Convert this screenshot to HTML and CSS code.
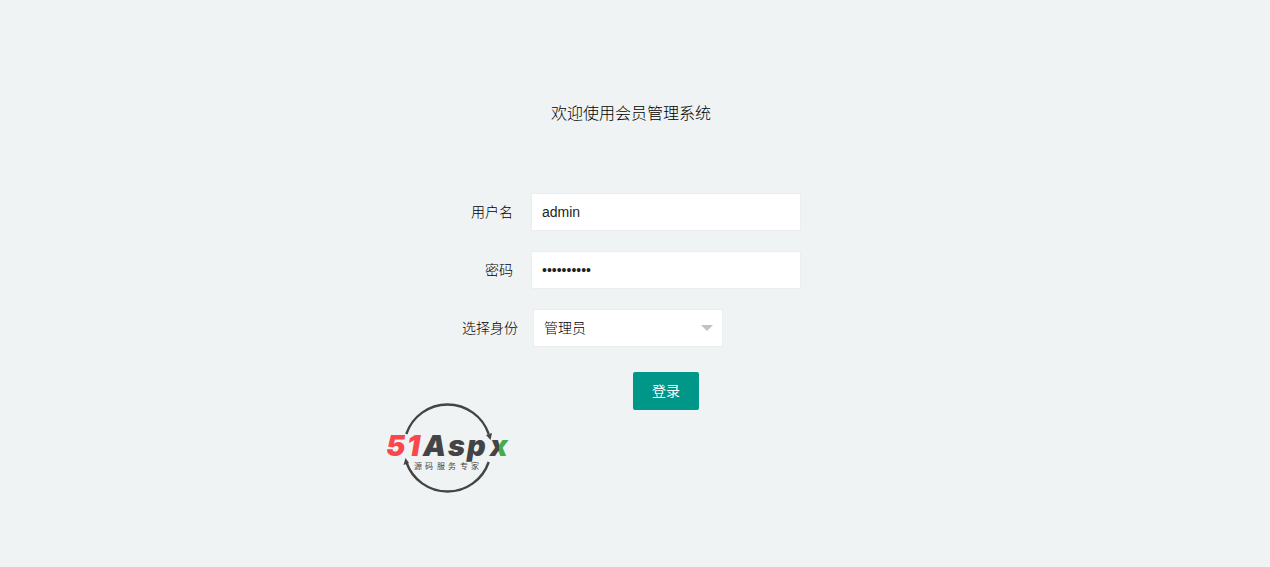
FILE: index.html
```html
<!DOCTYPE html>
<html lang="zh-CN">
<head>
<meta charset="utf-8">
<title>会员管理系统</title>
<link rel="stylesheet" href="styles.css">
</head>
<body>
<main class="login">
  <h1 class="title">欢迎使用会员管理系统</h1>
  <form class="form">
    <div class="row">
      <label class="label" for="user">用户名</label>
      <input class="field" id="user" type="text" value="admin">
    </div>
    <div class="row">
      <label class="label" for="pass">密码</label>
      <input class="field" id="pass" type="password" value="admin12345">
    </div>
    <div class="row row-role">
      <label class="label" for="role">选择身份</label>
      <div class="select-wrap">
        <select class="field" id="role"><option>管理员</option><option>会员</option></select>
      </div>
    </div>
    <div class="actions"><button class="submit" type="button">登录</button></div>
  </form>
  <svg class="logo" viewBox="0 0 128 92" role="img" aria-label="51Aspx 源码服务专家">
    <defs>
      <linearGradient id="x-fill" x1="0" y1="0" x2="1" y2="0">
        <stop offset="0.5" stop-color="#444446"/>
        <stop offset="0.5" stop-color="#43ad49"/>
      </linearGradient>
    </defs>
    <g fill="none" stroke="#444446" stroke-width="2.4">
      <path d="M19.300 32A43.500 43.500 0 0 1 101.700 32"/>
      <path d="M19.300 60A43.500 43.500 0 0 0 101.700 60"/>
    </g>
    <path fill="#444446" d="M99 33L105 31L103.500 38ZM16.500 63L18.500 56L22 61Z"/>
    <g class="wordmark">
      <text class="red" x="-1 20" y="54">51</text>
      <text class="dark" x="36 61 80" y="54">Asp</text>
      <text class="green" x="103" y="54">x</text>
    </g>
    <text class="slogan" x="27 38 50 61 73 84" y="67">源码服务专家</text>
  </svg>
</main>
</body>
</html>
```
FILE: styles.css
```css
* { box-sizing: border-box; }

body {
  margin: 0;
  background: #eff3f4;
  color: #222;
  font: 14px/20px "Liberation Sans", "Noto Sans CJK SC", sans-serif;
}

.login {
  max-width: 496px;
  margin: 0 auto;
  padding-top: 102px;
}

.title {
  margin: 0 8px 67px 0;
  font-size: 16px;
  line-height: 24px;
  font-weight: 300;
  color: #000;
  text-align: center;
}

.form {
  display: flex;
  flex-direction: column;
  gap: 20px;
}

.row {
  display: flex;
  align-items: center;
  gap: 18px;
}

.row-role { gap: 15px; }

.label {
  width: 126px;
  text-align: right;
  font-weight: 300;
  color: #000;
}

.row-role .label { width: 131px; }

.field {
  width: 270px;
  height: 38px;
  padding: 0 10px;
  border: 1px solid #ebedef;
  border-radius: 2px;
  background: #fff;
  color: #222;
  font: inherit;
  font-weight: 300;
  appearance: none;
  outline: none;
}

.select-wrap {
  position: relative;
  width: 190px;
}

.select-wrap .field { width: 100%; display: block; color: #000; }

.select-wrap::after {
  content: "";
  position: absolute;
  top: 16px;
  right: 10px;
  border: 6px solid transparent;
  border-top-color: #c2c2c2;
  border-bottom-width: 0;
  pointer-events: none;
}

.actions {
  padding: 5px 0 0 246px;
}

.submit {
  display: block;
  height: 38px;
  padding: 0 19px;
  border: 0;
  border-radius: 2px;
  background: #009688;
  color: #fff;
  font: inherit;
}

.logo {
  display: block;
  width: 128px;
  height: 92px;
  margin-top: -8px;
}

.wordmark {
  font-family: Inter, sans-serif;
  font-size: 29px;
  font-weight: 900;
  font-style: italic;
}

.red { fill: #f8484b; }
.dark { fill: #444446; }
.green { fill: url(#x-fill); }

.slogan {
  fill: #444446;
  font-family: "Noto Sans CJK SC", sans-serif;
  font-size: 8px;
}
```
